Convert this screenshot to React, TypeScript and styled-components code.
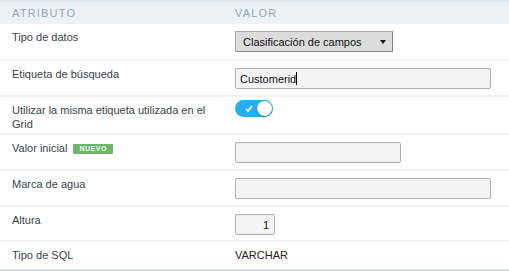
import React from "react";
import styled, { createGlobalStyle } from "styled-components";

const Global = createGlobalStyle`
  html, body { margin: 0; padding: 0; background: #fff; }
  body { font-family: "Liberation Sans", Arial, sans-serif; }
`;

const Table = styled.div`
  width: 509px;
  border-top: 2px solid #dfe5eb;
  border-bottom: 3px solid #d5dde5;
  box-sizing: border-box;
`;

const Header = styled.div`
  display: grid;
  grid-template-columns: 223px 1fr;
  padding-left: 12px;
  height: 22px;
  align-items: center;
  background: #eef2f5;
  font-size: 11px;
  letter-spacing: 1.2px;
  color: #8fa7bb;
`;

const Row = styled.div<{ $h: number }>`
  display: grid;
  grid-template-columns: 223px 1fr;
  padding: 7px 0 0 12px;
  height: ${(p) => p.$h}px;
  box-sizing: border-box;
  border-bottom: 2px solid #f0f2f5;
  &:last-child { border-bottom: none; }
`;

const Label = styled.div`
  font-size: 11px;
  line-height: 14px;
  color: #36434f;
  margin-top: -1px;
  padding-right: 14px;
`;

const Badge = styled.span`
  display: inline-block;
  margin-left: 6px;
  padding: 0 6px;
  height: 10px;
  line-height: 10px;
  font-size: 7px;
  font-weight: bold;
  letter-spacing: 0.5px;
  color: #eef7ee;
  background: #6db66d;
  border-radius: 1px;
  vertical-align: 1px;
`;

const Select = styled.div`
  width: 158px;
  height: 21px;
  box-sizing: border-box;
  border: 1px solid #a9aeb4;
  border-right-color: #7d8187;
  border-bottom-color: #8a8e94;
  background: #dcdcdc;
  display: flex;
  align-items: center;
  justify-content: space-between;
  padding: 0 6px 0 7px;
  font-size: 11px;
  color: #111;
`;

const Arrow = styled.span`
  width: 0;
  height: 0;
  border-left: 3px solid transparent;
  border-right: 3px solid transparent;
  border-top: 4px solid #111;
`;

const Input = styled.div<{ $w: number; $right?: boolean }>`
  width: ${(p) => p.$w}px;
  height: 21px;
  box-sizing: border-box;
  border: 1px solid #aab1b9;
  border-radius: 2px;
  background: #f4f4f4;
  font-size: 11px;
  color: #111;
  display: flex;
  align-items: center;
  justify-content: ${(p) => (p.$right ? "flex-end" : "flex-start")};
  padding: 0 5px 0 4px;
`;

const Caret = styled.span`
  display: inline-block;
  width: 1px;
  height: 13px;
  background: #000;
`;

const Toggle = styled.div`
  width: 38px;
  height: 17px;
  border-radius: 9px;
  background: #27aef6;
  position: relative;
  margin-top: -4px;
`;

const Knob = styled.span`
  position: absolute;
  right: 1px;
  top: 1px;
  width: 15px;
  height: 15px;
  border-radius: 50%;
  background: #fff;
  box-shadow: 0 1px 2px rgba(0, 0, 0, 0.35);
`;

const Check = styled.svg`
  position: absolute;
  left: 10px;
  top: 5px;
`;

const Text = styled.div`
  font-size: 11px;
  line-height: 14px;
  color: #222;
  margin-top: -1px;
`;

export default function App() {
  return (
    <>
      <Global />
      <Table>
        <Header>
          <span>ATRIBUTO</span>
          <span>VALOR</span>
        </Header>
        <Row $h={37}>
          <Label>Tipo de datos</Label>
          <div>
            <Select>
              <span>Clasificación de campos</span>
              <Arrow />
            </Select>
          </div>
        </Row>
        <Row $h={36}>
          <Label>Etiqueta de búsqueda</Label>
          <div>
            <Input $w={256}>
              Customerid
              <Caret />
            </Input>
          </div>
        </Row>
        <Row $h={38}>
          <Label>Utilizar la misma etiqueta utilizada en el Grid</Label>
          <div>
            <Toggle>
              <Check width="8" height="7" viewBox="0 0 8 7">
                <path d="M1 4 L3 6 L7 1" stroke="#fff" strokeWidth="1.6" fill="none" />
              </Check>
              <Knob />
            </Toggle>
          </div>
        </Row>
        <Row $h={36}>
          <Label>
            Valor inicial<Badge>NUEVO</Badge>
          </Label>
          <div>
            <Input $w={166} />
          </div>
        </Row>
        <Row $h={36}>
          <Label>Marca de agua</Label>
          <div>
            <Input $w={256} />
          </div>
        </Row>
        <Row $h={35}>
          <Label>Altura</Label>
          <div>
            <Input $w={40} $right>
              1
            </Input>
          </div>
        </Row>
        <Row $h={27}>
          <Label>Tipo de SQL</Label>
          <Text>VARCHAR</Text>
        </Row>
      </Table>
    </>
  );
}
